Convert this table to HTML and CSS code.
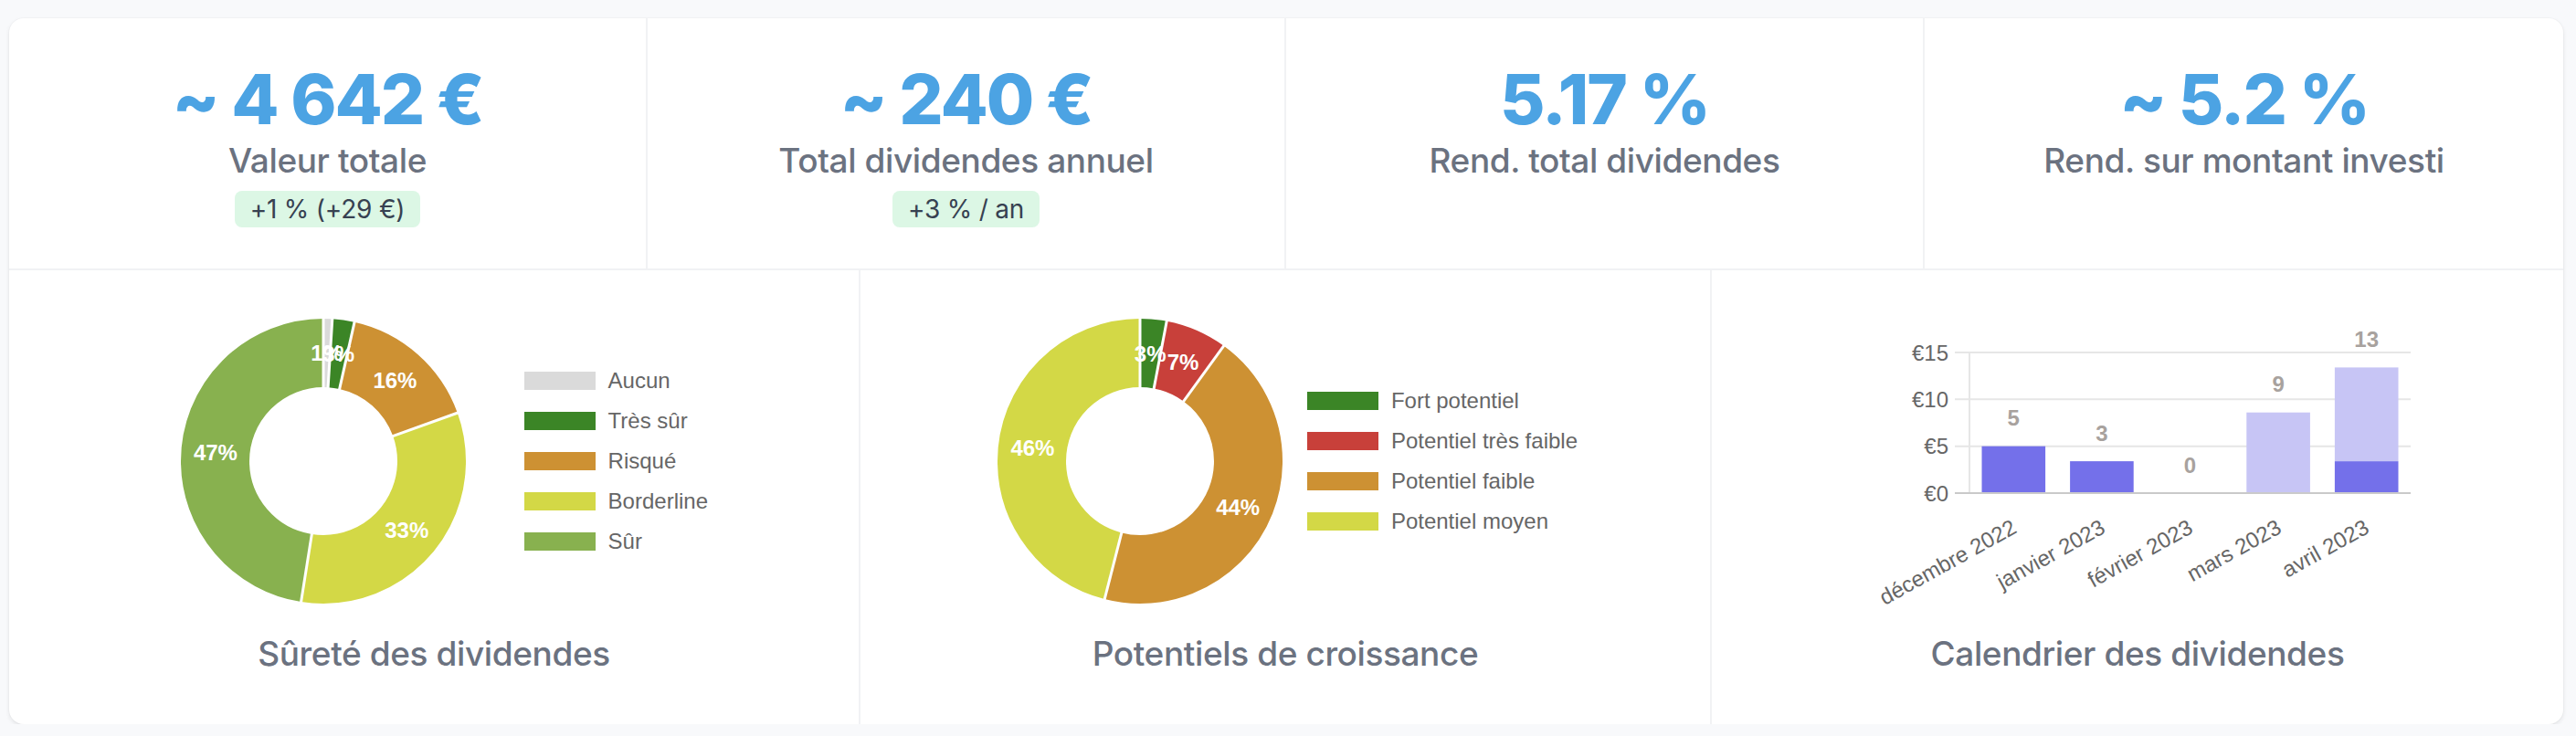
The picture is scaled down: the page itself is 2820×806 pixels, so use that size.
FILE: index.html
```html
<!DOCTYPE html>
<html lang="fr">
<head>
<meta charset="utf-8">
<title>Tableau de bord dividendes</title>
<link rel="stylesheet" href="styles.css">
</head>
<body>
<div class="page">
  <section class="card">
    <div class="stats">
      <div class="stat">
        <div class="stat-value">~ 4 642 €</div>
        <div class="stat-label">Valeur totale</div>
        <div class="stat-badge">+1 % (+29 €)</div>
      </div>
      <div class="stat">
        <div class="stat-value">~ 240 €</div>
        <div class="stat-label">Total dividendes annuel</div>
        <div class="stat-badge">+3 % / an</div>
      </div>
      <div class="stat">
        <div class="stat-value">5.17 %</div>
        <div class="stat-label">Rend. total dividendes</div>
      </div>
      <div class="stat">
        <div class="stat-value">~ 5.2 %</div>
        <div class="stat-label">Rend. sur montant investi</div>
      </div>
    </div>

    <div class="charts">
      <div class="chart-cell">
        <div class="chart-area chart-body chart-body--safety">
          <div class="donut-area">
            <svg class="donut" width="312" height="312" viewBox="0 0 312 312">
              <g transform="rotate(-90 156 156)" fill="none" stroke-width="75">
                <circle cx="156" cy="156" r="118.5" stroke="#dadada" stroke-dasharray="7.45 744.56" stroke-dashoffset="0"/>
                <circle cx="156" cy="156" r="118.5" stroke="#3b8526" stroke-dasharray="18.61 744.56" stroke-dashoffset="-7.45"/>
                <circle cx="156" cy="156" r="118.5" stroke="#cd9133" stroke-dasharray="119.13 744.56" stroke-dashoffset="-26.06"/>
                <circle cx="156" cy="156" r="118.5" stroke="#d3d846" stroke-dasharray="245.70 744.56" stroke-dashoffset="-145.19"/>
                <circle cx="156" cy="156" r="118.5" stroke="#88b14f" stroke-dasharray="353.67 744.56" stroke-dashoffset="-390.89"/>
              </g>
              <g stroke="#fff" stroke-width="3">
                <line x1="156" y1="76" x2="156" y2="-2"/>
                <line x1="156" y1="76" x2="156" y2="-2" transform="rotate(3.6 156 156)"/>
                <line x1="156" y1="76" x2="156" y2="-2" transform="rotate(12.6 156 156)"/>
                <line x1="156" y1="76" x2="156" y2="-2" transform="rotate(70.2 156 156)"/>
                <line x1="156" y1="76" x2="156" y2="-2" transform="rotate(189 156 156)"/>
              </g>
              <g class="donut-labels">
                <text x="159.7" y="37.6">1%</text>
                <text x="172.7" y="38.7">3%</text>
                <text x="234.4" y="67.1">16%</text>
                <text x="247.3" y="231.5">33%</text>
                <text x="37.9" y="146.7">47%</text>
              </g>
            </svg>
          </div>
          <ul class="legend">
            <li class="legend-item"><span class="legend-box legend-box--none"></span>Aucun</li>
            <li class="legend-item"><span class="legend-box legend-box--verysafe"></span>Très sûr</li>
            <li class="legend-item"><span class="legend-box legend-box--risky"></span>Risqué</li>
            <li class="legend-item"><span class="legend-box legend-box--borderline"></span>Borderline</li>
            <li class="legend-item"><span class="legend-box legend-box--safe"></span>Sûr</li>
          </ul>
        </div>
        <h2 class="chart-title">Sûreté des dividendes</h2>
      </div>

      <div class="chart-cell">
        <div class="chart-area chart-body chart-body--growth">
          <div class="donut-area">
            <svg class="donut" width="312" height="312" viewBox="0 0 312 312">
              <g transform="rotate(-90 156 156)" fill="none" stroke-width="75">
                <circle cx="156" cy="156" r="118.5" stroke="#3b8526" stroke-dasharray="22.34 744.56" stroke-dashoffset="0"/>
                <circle cx="156" cy="156" r="118.5" stroke="#c8403a" stroke-dasharray="52.12 744.56" stroke-dashoffset="-22.34"/>
                <circle cx="156" cy="156" r="118.5" stroke="#cd9133" stroke-dasharray="327.61 744.56" stroke-dashoffset="-74.46"/>
                <circle cx="156" cy="156" r="118.5" stroke="#d3d846" stroke-dasharray="342.50 744.56" stroke-dashoffset="-402.07"/>
              </g>
              <g stroke="#fff" stroke-width="3">
                <line x1="156" y1="76" x2="156" y2="-2"/>
                <line x1="156" y1="76" x2="156" y2="-2" transform="rotate(10.8 156 156)"/>
                <line x1="156" y1="76" x2="156" y2="-2" transform="rotate(36 156 156)"/>
                <line x1="156" y1="76" x2="156" y2="-2" transform="rotate(194.4 156 156)"/>
              </g>
              <g class="donut-labels">
                <text x="167.2" y="38">3%</text>
                <text x="203.1" y="47.2">7%</text>
                <text x="263.2" y="206.5">44%</text>
                <text x="38.4" y="141.2">46%</text>
              </g>
            </svg>
          </div>
          <ul class="legend">
            <li class="legend-item"><span class="legend-box legend-box--verysafe"></span>Fort potentiel</li>
            <li class="legend-item"><span class="legend-box legend-box--red"></span>Potentiel très faible</li>
            <li class="legend-item"><span class="legend-box legend-box--risky"></span>Potentiel faible</li>
            <li class="legend-item"><span class="legend-box legend-box--borderline"></span>Potentiel moyen</li>
          </ul>
        </div>
        <h2 class="chart-title">Potentiels de croissance</h2>
      </div>

      <div class="chart-cell">
        <div class="chart-area">
          <svg class="bar-chart" width="932" height="398" viewBox="0 0 932 398">
            <g class="grid" stroke="#e6e6e6" stroke-width="2">
              <line x1="266" y1="90" x2="765" y2="90"/>
              <line x1="266" y1="141.33" x2="765" y2="141.33"/>
              <line x1="266" y1="192.67" x2="765" y2="192.67"/>
              <line x1="282" y1="89" x2="282" y2="245"/>
            </g>
            <g class="y-ticks">
              <text x="259" y="90">€15</text>
              <text x="259" y="141.33">€10</text>
              <text x="259" y="192.67">€5</text>
              <text x="259" y="244">€0</text>
            </g>
            <g class="bars">
              <rect x="295.5" y="192.67" width="69.6" height="51.33" fill="#7470ea"/>
              <rect x="392.1" y="209.1" width="69.6" height="34.9" fill="#7470ea"/>
              <rect x="585.3" y="155.7" width="69.6" height="88.3" fill="#c7c5f5"/>
              <rect x="681.9" y="209.1" width="69.6" height="34.9" fill="#7470ea"/>
              <rect x="681.9" y="106.4" width="69.6" height="102.7" fill="#c7c5f5"/>
            </g>
            <line x1="266" y1="244" x2="765" y2="244" stroke="#cacaca" stroke-width="2"/>
            <g class="bar-values">
              <text x="330.3" y="161.7">5</text>
              <text x="426.9" y="178.1">3</text>
              <text x="523.5" y="213">0</text>
              <text x="620.1" y="124.7">9</text>
              <text x="716.7" y="75.4">13</text>
            </g>
            <g class="x-ticks">
              <text transform="translate(331 279) rotate(-29)">décembre 2022</text>
              <text transform="translate(428 279) rotate(-29)">janvier 2023</text>
              <text transform="translate(524 279) rotate(-29)">février 2023</text>
              <text transform="translate(621 279) rotate(-29)">mars 2023</text>
              <text transform="translate(717 279) rotate(-29)">avril 2023</text>
            </g>
          </svg>
        </div>
        <h2 class="chart-title">Calendrier des dividendes</h2>
      </div>
    </div>
  </section>
</div>
</body>
</html>
```

FILE: styles.css
```css
* {
  box-sizing: border-box;
}

body {
  margin: 0;
  background: #f8f9fb;
  font-family: Inter, "Noto Sans", sans-serif;
}

.page {
  padding: 20px 14px 0 10px;
}

.card {
  background: #ffffff;
  border-radius: 16px;
  box-shadow: 0 2px 5px rgba(0, 0, 0, 0.09), 0 0 0 1px rgba(0, 0, 0, 0.015);
  overflow: hidden;
}

/* ---------- stats row ---------- */
.stats {
  display: grid;
  grid-template-columns: repeat(4, 1fr);
  height: 276px;
  border-bottom: 2px solid #f1f2f4;
}

.stat {
  display: flex;
  flex-direction: column;
  align-items: center;
  padding-top: 50px;
  border-right: 2px solid #f1f2f4;
}

.stat:last-child {
  border-right: none;
}

.stat-value {
  font-size: 76px;
  line-height: 76px;
  font-weight: 800;
  letter-spacing: -2px;
  color: #4ca3e3;
  white-space: nowrap;
}

.stat-label {
  margin-top: 8px;
  font-size: 37px;
  line-height: 44px;
  font-weight: 500;
  letter-spacing: -0.4px;
  color: #6b7280;
  white-space: nowrap;
}

.stat-badge {
  margin-top: 11px;
  padding: 0 17px;
  height: 40px;
  line-height: 40px;
  font-size: 28px;
  font-weight: 400;
  letter-spacing: -0.2px;
  color: #374151;
  background: #dcf7e5;
  border-radius: 8px;
  white-space: nowrap;
}

/* ---------- charts row ---------- */
.charts {
  display: grid;
  grid-template-columns: repeat(3, 1fr);
  height: 497px;
}

.chart-cell {
  display: flex;
  flex-direction: column;
  border-right: 2px solid #f1f2f4;
}

.chart-cell:last-child {
  border-right: none;
}

.chart-area {
  height: 398px;
}

.chart-body {
  display: flex;
  align-items: center;
  padding-top: 20px;
  padding-left: 124px;
}

.chart-body--safety {
  padding-right: 165px;
}

.chart-body--growth {
  padding-right: 145px;
}

.donut-area {
  flex: 1;
  display: flex;
  justify-content: center;
}

.donut {
  display: block;
}

.donut-labels text {
  font-family: "Liberation Sans", Arial, sans-serif;
  font-size: 24px;
  font-weight: 700;
  fill: #ffffff;
  text-anchor: middle;
  dominant-baseline: central;
}

.legend {
  list-style: none;
  margin: 0;
  padding: 0;
  display: flex;
  flex-direction: column;
  gap: 24px;
  font-family: "Liberation Sans", Arial, sans-serif;
  font-size: 24px;
  color: #666666;
}

.legend-item {
  display: flex;
  align-items: center;
  gap: 14px;
  height: 20px;
  line-height: 20px;
  white-space: nowrap;
}

.legend-box {
  width: 78px;
  height: 20px;
  flex: none;
}

.legend-box--none { background: #dadada; }
.legend-box--verysafe { background: #3b8526; }
.legend-box--risky { background: #cd9133; }
.legend-box--borderline { background: #d3d846; }
.legend-box--safe { background: #88b14f; }
.legend-box--red { background: #c8403a; }

.bar-chart {
  display: block;
  overflow: visible;
}

.y-ticks text {
  font-family: "Liberation Sans", Arial, sans-serif;
  font-size: 24px;
  fill: #666666;
  text-anchor: end;
  dominant-baseline: central;
}

.bar-values text {
  font-family: "Liberation Sans", Arial, sans-serif;
  font-size: 24px;
  font-weight: 700;
  fill: #a8a29e;
  text-anchor: middle;
  dominant-baseline: central;
}

.x-ticks text {
  font-family: "Liberation Sans", Arial, sans-serif;
  font-size: 24px;
  fill: #666666;
  text-anchor: end;
  dominant-baseline: central;
}

.chart-title {
  margin: 0;
  text-align: center;
  font-size: 37px;
  line-height: 44px;
  font-weight: 500;
  letter-spacing: -0.4px;
  color: #6b7280;
}
```
